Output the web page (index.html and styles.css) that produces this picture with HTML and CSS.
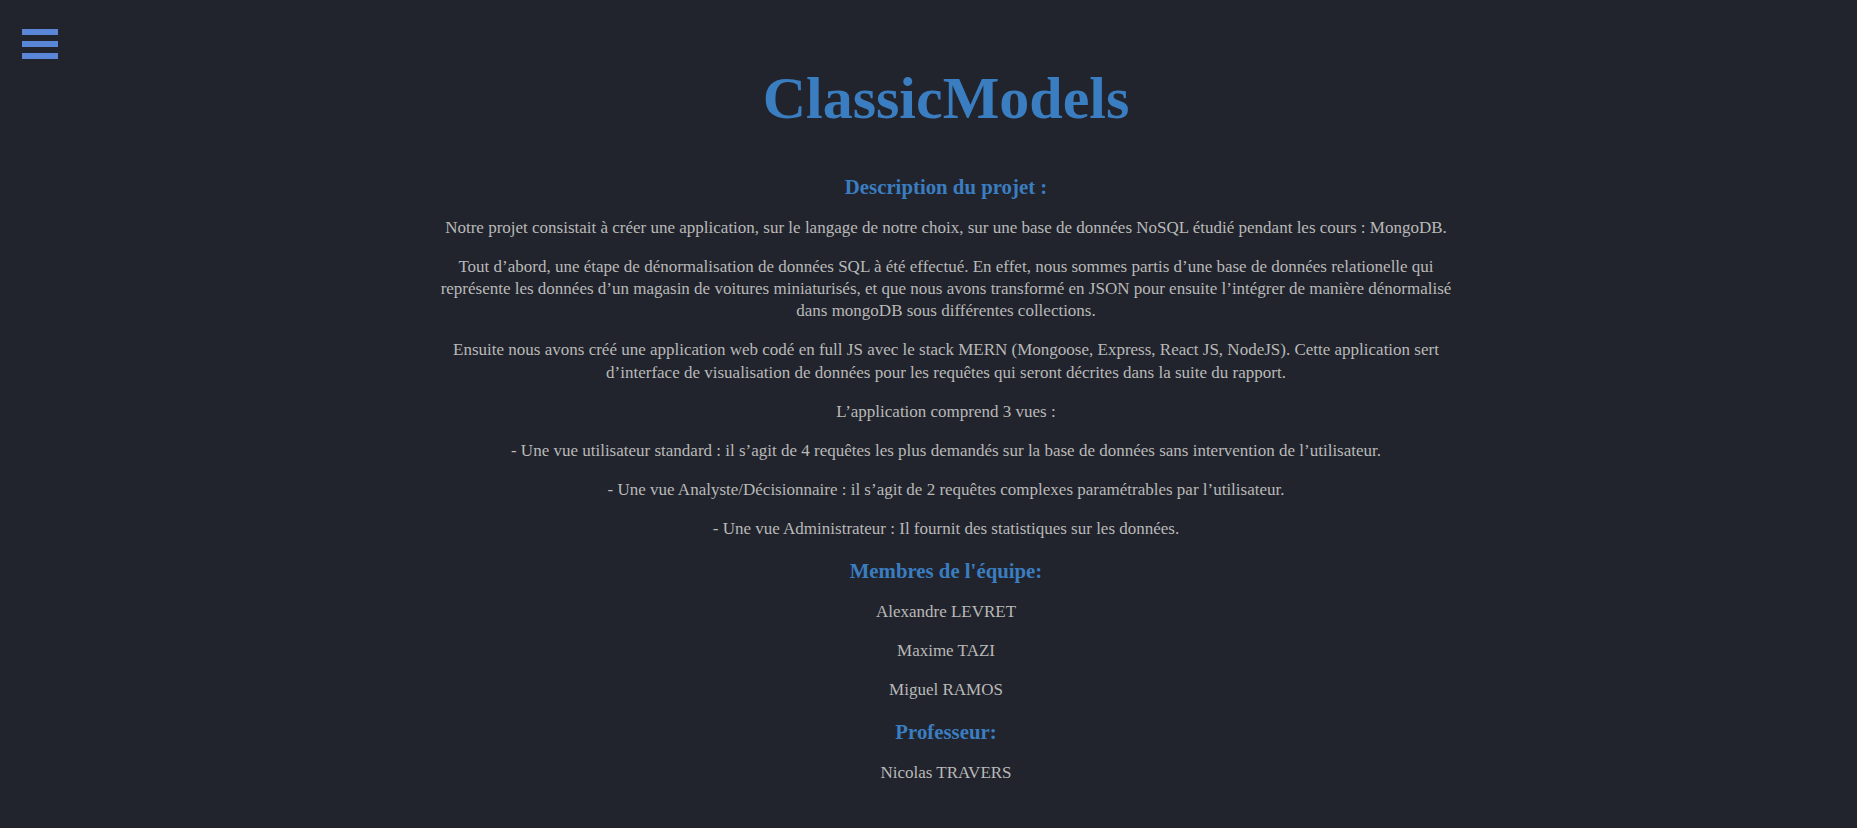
FILE: index.html
```html
<!DOCTYPE html>
<html lang="fr">
<head>
<meta charset="utf-8">
<title>ClassicModels</title>
<link rel="stylesheet" href="styles.css">
</head>
<body>
<button class="menu-toggle" aria-label="Menu">
  <span class="bar"></span>
  <span class="bar"></span>
  <span class="bar"></span>
</button>
<main class="content">
  <h1 class="title">ClassicModels</h1>
  <h2 class="section-title">Description du projet :</h2>
  <p>Notre projet consistait à créer une application, sur le langage de notre choix, sur une base de données NoSQL étudié pendant les cours : MongoDB.</p>
  <p>Tout d’abord, une étape de dénormalisation de données SQL à été effectué. En effet, nous sommes partis d’une base de données relationelle qui représente les données d’un magasin de voitures miniaturisés, et que nous avons transformé en JSON pour ensuite l’intégrer de manière dénormalisé dans mongoDB sous différentes collections.</p>
  <p>Ensuite nous avons créé une application web codé en full JS avec le stack MERN (Mongoose, Express, React JS, NodeJS). Cette application sert d’interface de visualisation de données pour les requêtes qui seront décrites dans la suite du rapport.</p>
  <p>L’application comprend 3 vues :</p>
  <p>- Une vue utilisateur standard : il s’agit de 4 requêtes les plus demandés sur la base de données sans intervention de l’utilisateur.</p>
  <p>- Une vue Analyste/Décisionnaire : il s’agit de 2 requêtes complexes paramétrables par l’utilisateur.</p>
  <p>- Une vue Administrateur : Il fournit des statistiques sur les données.</p>
  <h2 class="section-title">Membres de l'équipe:</h2>
  <p>Alexandre LEVRET</p>
  <p>Maxime TAZI</p>
  <p>Miguel RAMOS</p>
  <h2 class="section-title">Professeur:</h2>
  <p>Nicolas TRAVERS</p>
</main>
</body>
</html>
```
FILE: styles.css
```css
html, body {
  margin: 0;
  padding: 0;
  background: #21242c;
}
body {
  font-family: "Liberation Serif", "Times New Roman", serif;
  color: #b9b9b9;
  font-size: 17px;
  padding-left: 35px;
}
.menu-toggle {
  position: fixed;
  left: 22px;
  top: 29px;
  display: flex;
  flex-direction: column;
  gap: 6px;
  padding: 0;
  margin: 0;
  border: 0;
  background: transparent;
  cursor: pointer;
}
.bar {
  display: block;
  width: 36px;
  height: 6px;
  background: #5a86d8;
}
.content {
  width: 1024px;
  margin: 0 auto;
  padding-top: 64px;
  text-align: center;
}
.title {
  font-size: 60px;
  font-weight: bold;
  color: #3a7dc0;
  margin: 0 0 40px;
  line-height: 1.15;
}
.section-title {
  font-size: 20.8px;
  font-weight: bold;
  color: #3a7dc0;
  margin: 17px 0;
  line-height: 1.3;
}
p {
  margin: 17px 0;
  line-height: 1.3;
}
```
